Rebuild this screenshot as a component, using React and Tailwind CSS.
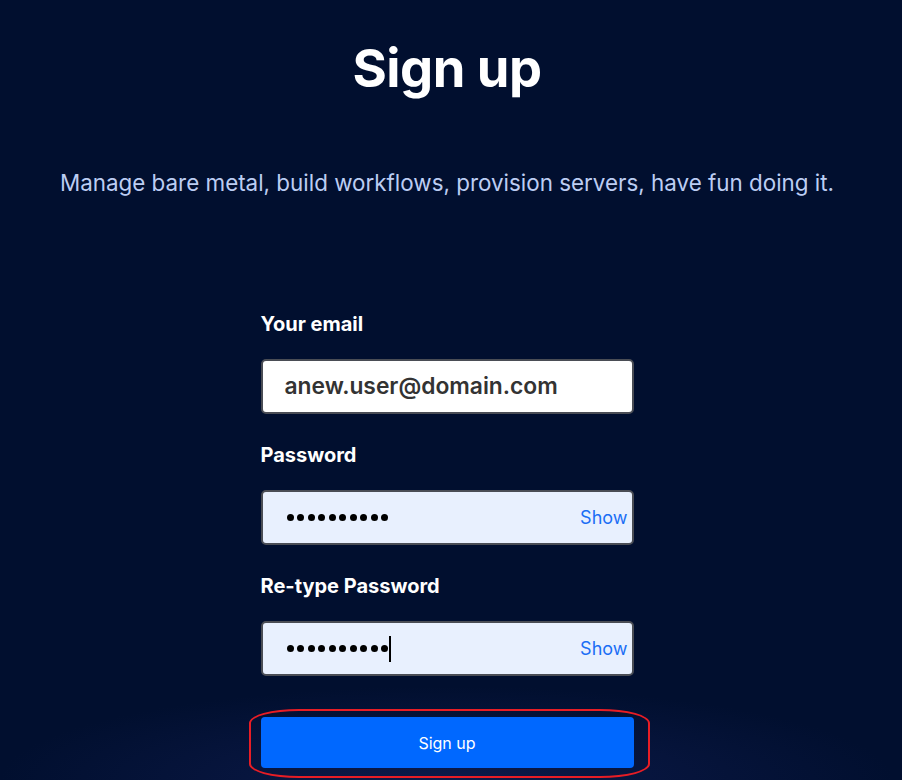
import React, { useState } from "react";

const Dots = ({ count }) => (
  <span className="flex items-center gap-[3.5px]">
    {Array.from({ length: count }).map((_, i) => (
      <span key={i} className="inline-block w-[7px] h-[7px] rounded-full bg-black" />
    ))}
  </span>
);

const PasswordField = ({ label, value, caret }) => {
  const [show, setShow] = useState(false);
  return (
    <div className="flex flex-col">
      <label className="text-[20px] font-bold text-white leading-none mb-[25px]">{label}</label>
      <div className="flex items-center h-[55px] rounded-[5px] border-2 border-[#4a4d55] bg-[#e8f0fe]">
        <span className="pl-[24px] flex items-center text-[20px] text-black leading-none">
          {show ? value : <Dots count={value.length} />}
          {caret && <span className="ml-[1px] w-[2px] h-[26px] bg-black inline-block" />}
        </span>
        <button
          type="button"
          onClick={() => setShow(!show)}
          className="ml-auto pr-[4px] text-[18px] text-[#1a6ef5] leading-none"
        >
          Show
        </button>
      </div>
    </div>
  );
};

const App = () => {
  return (
    <div
      className="min-h-[780px] w-full overflow-hidden bg-[#010f2f] text-white"
      style={{ fontFamily: "Inter, 'Noto Sans', sans-serif" }}
    >
      <div className="relative w-[894px] h-[780px] flex flex-col items-center bg-[radial-gradient(ellipse_50%_12%_at_50%_100%,#0c1a4a_0%,#010f2f_100%)]">
        <h1 className="mt-[36px] text-[52.5px] font-bold leading-[64px] tracking-[-0.5px]">Sign up</h1>
        <p className="mt-[69px] text-[22.4px] leading-[28px] text-[#bccdf3]">
          Manage bare metal, build workflows, provision servers, have fun doing it.
        </p>
        <form className="mt-[117px] w-[373px] flex flex-col gap-[31px]">
          <div className="flex flex-col">
            <label className="text-[20px] font-bold text-white leading-none mb-[25px]">Your email</label>
            <div className="flex items-center h-[55px] rounded-[5px] border-2 border-[#4a4d55] bg-white">
              <span className="pl-[22px] text-[22.8px] font-semibold text-[#333333] leading-none">
                anew.user@domain.com
              </span>
            </div>
          </div>
          <PasswordField label="Password" value="mypassword" />
          <PasswordField label="Re-type Password" value="mypassword" caret />
        </form>
        <div className="relative mt-[41px] w-[373px]">
          <button
            type="button"
            className="w-full h-[51px] rounded-[4px] bg-[#0068ff] text-white text-[16px] leading-none"
          >
            Sign up
          </button>
          <div className="absolute left-[-12px] top-[-8px] w-[401px] h-[69px] rounded-[50px/14px] border-2 border-[#e81d25] pointer-events-none" />
        </div>
      </div>
    </div>
  );
};

export default App;
